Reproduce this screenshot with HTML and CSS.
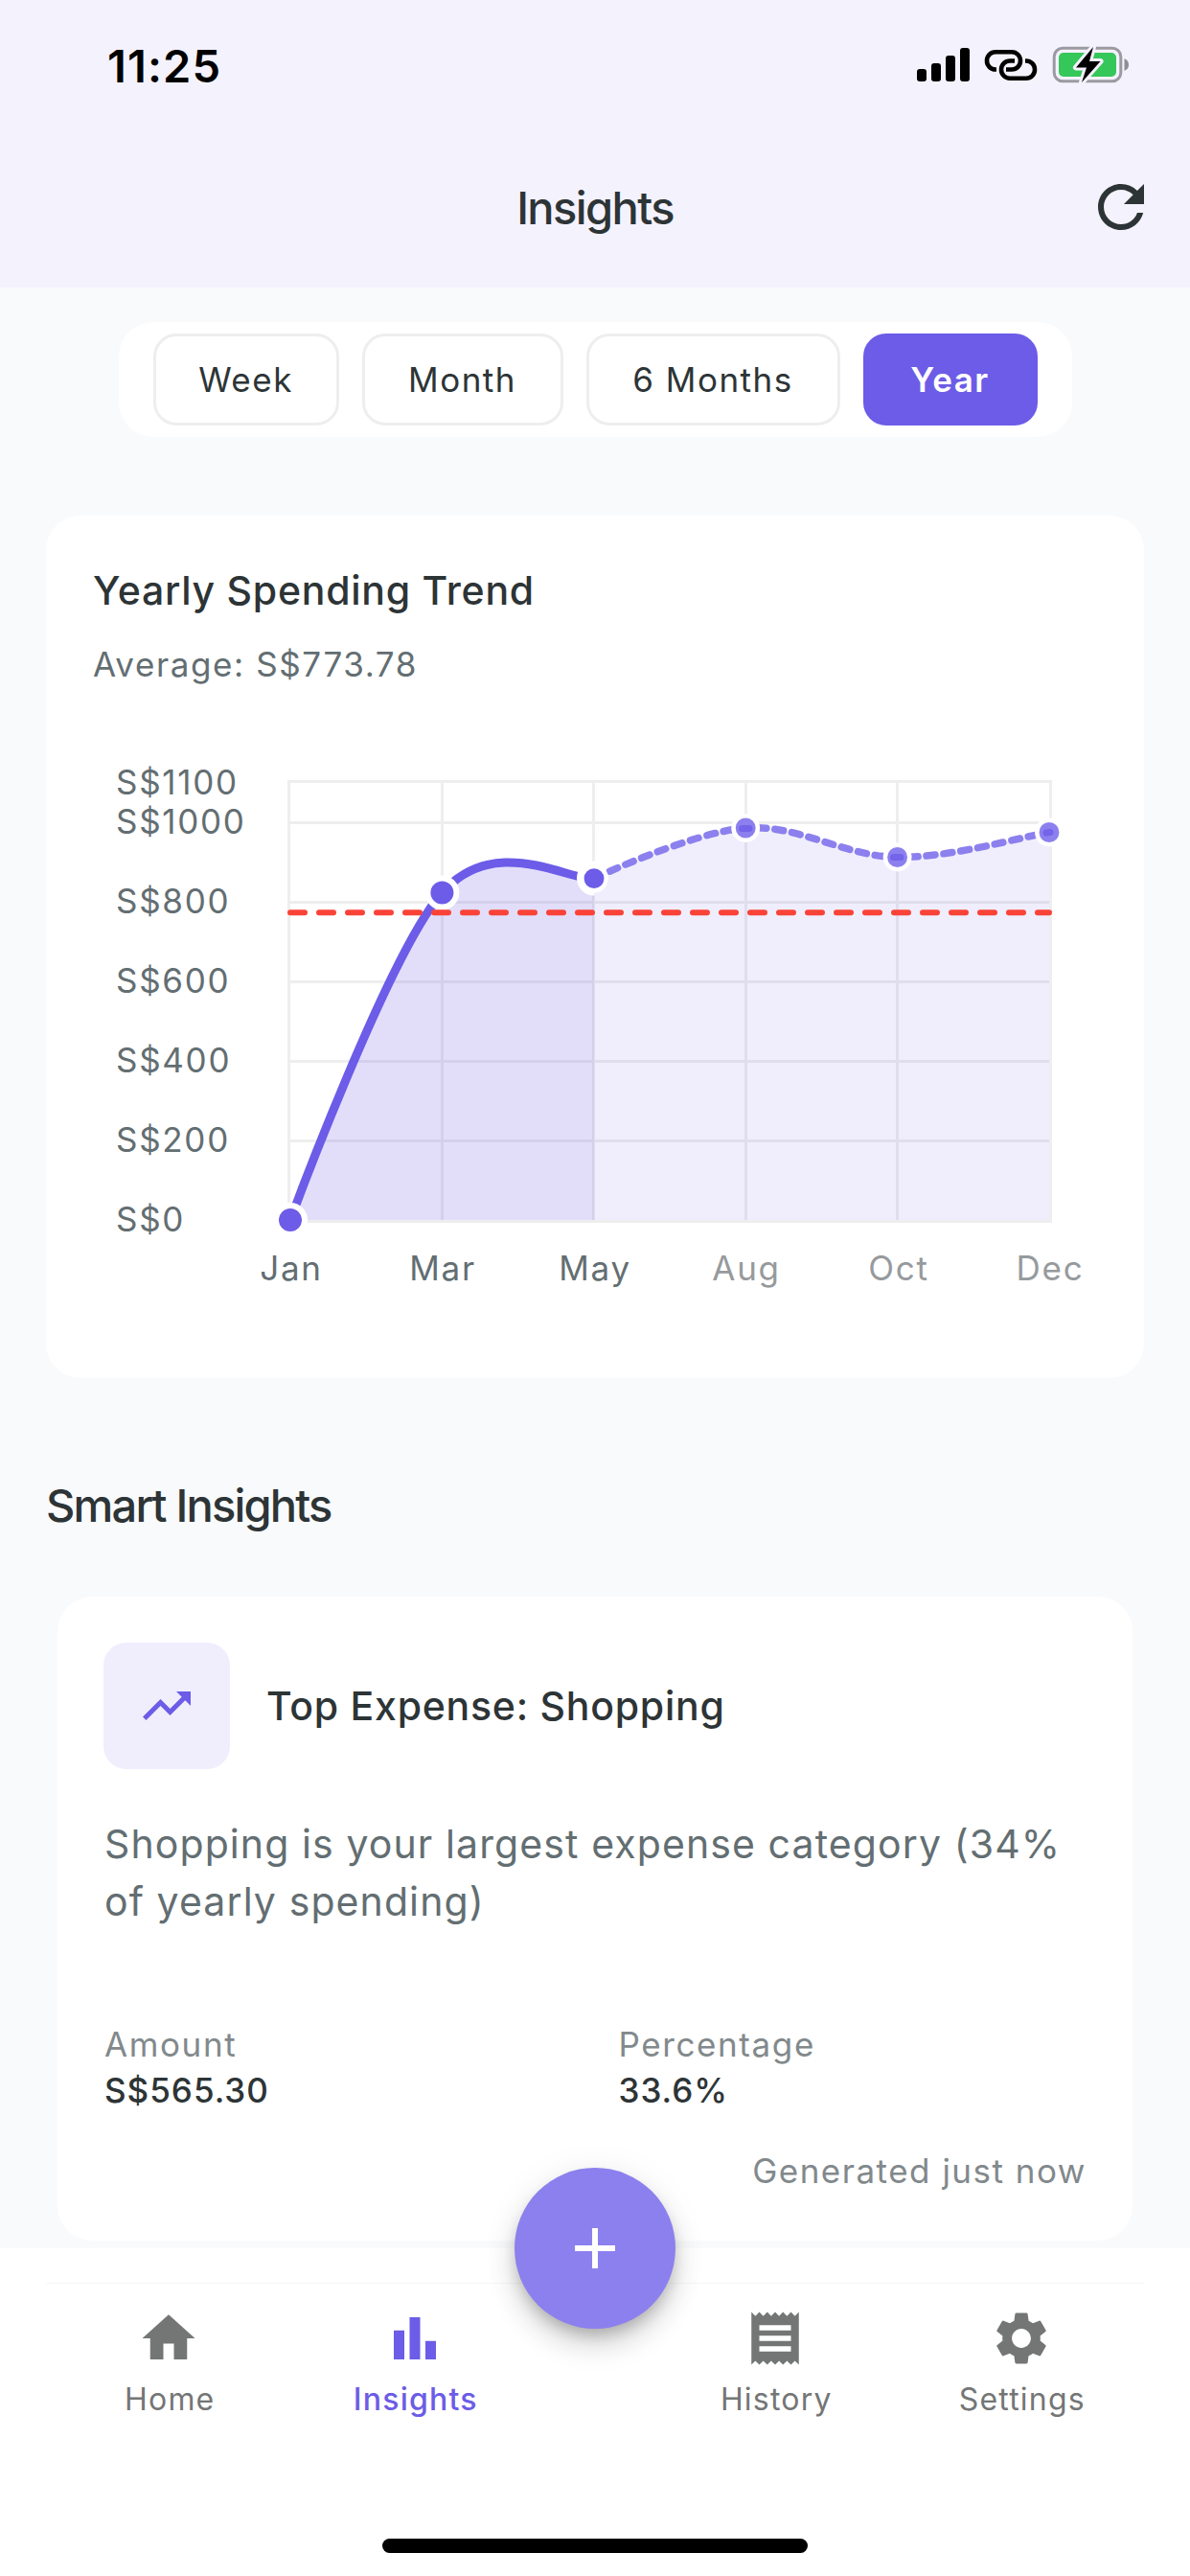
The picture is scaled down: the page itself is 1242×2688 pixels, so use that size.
FILE: index.html
```html
<!DOCTYPE html>
<html lang="en">
<head>
  <meta charset="UTF-8" />
  <title>Insights</title>
  <meta name="viewport" content="width=device-width, initial-scale=1" />
  <link rel="stylesheet" href="styles.css">
</head>
<body>
  <div class="app">
    <header class="header">
      <div class="status-bar">
        <span class="time">11:25</span>
        <svg class="status-icons" width="222" height="40" viewBox="957 48 222 40">
          <!-- Signal -->
          <rect x="957" y="72" width="10" height="13" rx="3" />
          <rect x="972" y="66" width="10" height="19" rx="3" />
          <rect x="987" y="58" width="10" height="27" rx="3" />
          <rect x="1002" y="50" width="10" height="35" rx="3" />
          <!-- Hotspot link -->
          <g fill="none" stroke="#000" stroke-width="4.6">
            <path d="M1040 72.5h-1a9 9 0 0 1-9-9.2a9 9 0 0 1 9-9h17a9 9 0 0 1 9 9.2a9 9 0 0 1-9 9h-6" />
            <path d="M1070 63.5h1a9 9 0 0 1 9 9.2a9 9 0 0 1-9 9h-17a9 9 0 0 1-9-9.2a9 9 0 0 1 9-9h5" />
          </g>
          <!-- Battery -->
          <rect x="1100.2" y="50.2" width="69.6" height="34.6" rx="9" fill="none" stroke="#9b9aa1" stroke-width="3" />
          <rect x="1105" y="55" width="60" height="25" rx="5" fill="#35c759" />
          <path d="M1173.5 61q4.5 2 4.5 6.500t-4.500 6.500z" fill="#8e8d93" />
          <path d="M1141 49l-18 21.500h11l-5 15.500 19.500-22h-11.500z" stroke="#f4f2fd" stroke-width="6" stroke-linejoin="round" />
          <path d="M1141 49l-18 21.500h11l-5 15.500 19.500-22h-11.500z" />
        </svg>
      </div>
      <div class="title-bar">
        <h1>Insights</h1>
        <svg class="refresh" viewBox="0 0 24 24"><path d="M17.65 6.350A7.958 7.958 0 0 0 12 4c-4.420 0-7.990 3.580-7.990 8s3.570 8 7.990 8c3.730 0 6.840-2.550 7.730-6h-2.080A5.990 5.990 0 0 1 12 18c-3.310 0-6-2.690-6-6s2.690-6 6-6c1.660 0 3.140.69 4.220 1.780L13 11h7V4l-2.350 2.350z" /></svg>
      </div>
    </header>

    <main class="content">
      <div class="period-tabs">
        <button class="tab week">Week</button>
        <button class="tab month">Month</button>
        <button class="tab half">6 Months</button>
        <button class="tab year active">Year</button>
      </div>

      <section class="card trend-card">
        <h2>Yearly Spending Trend</h2>
        <p class="average">Average: S$773.78</p>
        <svg class="chart" width="1096" height="620" viewBox="97 760 1096 620">
          <!-- Grid -->
          <g class="grid">
            <path d="M300 815.500H1098M300 858.500H1098M300 941.500H1098M300 1024.500H1098M300 1107.500H1098M300 1190.500H1098M300 1274.500H1098" />
            <path d="M301.500 815V1274M461.500 815V1274M619.500 815V1274M778.500 815V1274M936.500 815V1274M1096.500 815V1274" />
          </g>

          <!-- Actual spending -->
          <path class="area" d="M303 1273C303 1273 406 994 461.400 931.500C517 869 592 919 620 916.600V1273Z" />
          <path class="line" d="M303 1273C303 1273 406 994 461.400 931.500C517 869 592 919 620 916.600" />
          <g class="dots">
            <circle cx="303" cy="1273" r="15" />
            <circle cx="461.400" cy="931.500" r="15" />
            <circle cx="620" cy="916.600" r="15" />
          </g>

          <!-- Forecast -->
          <path class="area forecast" d="M620 916.600C620 916.600 723 868 778.200 864C834 860 881 893.700 936.600 894.500C992 895.300 1067 873 1095 868.500V1273H620Z" />
          <path class="line forecast" d="M620 916.600C620 916.600 723 868 778.200 864C834 860 881 893.700 936.600 894.500C992 895.300 1067 873 1095 868.500" />
          <g class="dots forecast">
            <circle class="current" cx="620" cy="916.600" r="12.700" />
            <circle cx="778.200" cy="864" r="12.700" />
            <circle cx="936.600" cy="894.500" r="12.700" />
            <circle cx="1095" cy="868.500" r="12.700" />
          </g>
          <path class="dot-marks" d="M774.500 864.500h7.500M932.500 894.500h7.500M1092 869l4-.5" />

          <path class="average-line" d="M303 952.300H1095" />

          <g class="labels">
            <text x="121" y="829">S$1100</text>
            <text x="121" y="870">S$1000</text>
            <text x="121" y="953">S$800</text>
            <text x="121" y="1036">S$600</text>
            <text x="121" y="1119">S$400</text>
            <text x="121" y="1202">S$200</text>
            <text x="121" y="1285">S$0</text>
          </g>
          <g class="labels months">
            <text x="304" y="1336">Jan</text>
            <text x="462" y="1336">Mar</text>
            <text x="621" y="1336">May</text>
            <text class="future" x="779" y="1336">Aug</text>
            <text class="future" x="938" y="1336">Oct</text>
            <text class="future" x="1096" y="1336">Dec</text>
          </g>
        </svg>
      </section>

      <h2 class="section-title">Smart Insights</h2>

      <section class="card insight-card">
        <div class="insight-head">
          <div class="insight-icon">
            <svg viewBox="0 0 24 24"><path d="M16 6l2.290 2.290-4.880 4.880-4-4L2 16.590 3.410 18l6-6 4 4 6.300-6.290L22 12V6z" /></svg>
          </div>
          <h3>Top Expense: Shopping</h3>
        </div>
        <p class="insight-text">Shopping is your largest expense category (34%<br>of yearly spending)</p>
        <div class="stats">
          <div>
            <div class="stat-label">Amount</div>
            <div class="stat-value">S$565.30</div>
          </div>
          <div>
            <div class="stat-label">Percentage</div>
            <div class="stat-value">33.6%</div>
          </div>
        </div>
        <p class="generated">Generated just now</p>
      </section>
    </main>

    <nav class="bottom-nav">
      <button class="fab" aria-label="Add">
        <svg viewBox="0 0 24 24"><path d="M19 13h-6v6h-2v-6H5v-2h6V5h2v6h6v2z" /></svg>
      </button>
      <div class="nav-items">
        <a class="nav-item">
          <svg viewBox="0 0 24 24"><path d="M10 20v-6h4v6h5v-8h3L12 3 2 12h3v8z" /></svg>
          <span>Home</span>
        </a>
        <a class="nav-item active">
          <svg viewBox="0 0 24 24"><path d="M4 9h4v11H4zm12 4h4v7h-4zm-6-9h4v16h-4z" /></svg>
          <span>Insights</span>
        </a>
        <a class="nav-item after-fab">
          <svg viewBox="0 0 24 24"><path d="M18 17H6v-2h12v2zm0-4H6v-2h12v2zm0-4H6V7h12v2zM3 22l1.500-1.500L6 22l1.500-1.500L9 22l1.500-1.500L12 22l1.500-1.500L15 22l1.500-1.500L18 22l1.500-1.500L21 22V2l-1.500 1.500L18 2l-1.500 1.500L15 2l-1.500 1.500L12 2l-1.500 1.500L9 2 7.500 3.500 6 2 4.500 3.500 3 2v20z" /></svg>
          <span>History</span>
        </a>
        <a class="nav-item">
          <svg viewBox="0 0 24 24"><path d="M19.140 12.940c.04-.3.060-.61.060-.94 0-.32-.02-.64-.07-.94l2.030-1.580c.18-.14.230-.41.120-.61l-1.920-3.320c-.12-.22-.37-.29-.59-.22l-2.390.96c-.5-.38-1.030-.7-1.620-.94l-.36-2.540c-.04-.24-.24-.41-.48-.41h-3.840c-.24 0-.43.170-.47.410l-.36 2.540c-.59.240-1.130.57-1.620.94l-2.390-.96c-.22-.08-.47 0-.59.220L2.740 8.870c-.12.210-.08.470.120.610l2.030 1.580c-.05.3-.09.630-.09.940s.02.640.070.940l-2.030 1.580c-.18.140-.23.410-.12.610l1.920 3.320c.12.220.37.290.59.220l2.390-.96c.5.380 1.030.7 1.620.94l.36 2.540c.05.240.24.410.48.410h3.840c.24 0 .44-.17.470-.41l.36-2.540c.59-.24 1.130-.56 1.620-.94l2.390.96c.22.080.47 0 .59-.22l1.920-3.320c.12-.22.070-.47-.12-.61l-2.010-1.580zM12 15.600c-1.980 0-3.600-1.620-3.600-3.600s1.620-3.600 3.600-3.600 3.600 1.620 3.600 3.600-1.620 3.600-3.600 3.600z" /></svg>
          <span>Settings</span>
        </a>
      </div>
      <div class="home-indicator"></div>
    </nav>
  </div>
</body>
</html>
```
FILE: styles.css
```css
* {
  box-sizing: border-box;
}

body {
  margin: 0;
  font-family: Inter, 'Liberation Sans', sans-serif;
  background: #f9fafc;
  color: #2d3436;
}

h1, h2, h3, p {
  margin: 0;
  font-weight: 500;
}

button {
  font-family: inherit;
  border: none;
  padding: 0;
}

.app {
  width: 1242px;
  height: 2688px;
  display: flex;
  flex-direction: column;
  overflow: hidden;
}

/* Header */
.header {
  height: 300px;
  background: #f4f2fd;
  flex-shrink: 0;
}

.status-bar {
  display: flex;
  justify-content: space-between;
  align-items: center;
  height: 136px;
  padding: 0 63px 0 112px;
}

.time {
  font-size: 47px;
  font-weight: 600;
  color: #000;
  letter-spacing: 1.1px;
}

.title-bar {
  display: grid;
  grid-template-columns: 1fr auto 1fr;
  align-items: center;
  height: 160px;
  padding: 0 36px;
}

.title-bar h1 {
  grid-column: 2;
  padding-top: 2px;
  font-size: 47px;
  line-height: 60px;
  letter-spacing: -1.6px;
}

.refresh {
  width: 72px;
  height: 72px;
  justify-self: end;
  fill: #2d3436;
}

/* Content */
.content {
  height: 2046px;
  flex-shrink: 0;
  padding: 36px 48px 0;
  display: flex;
  flex-direction: column;
}

.period-tabs {
  align-self: center;
  display: flex;
  gap: 24px;
  padding: 12px 36px;
  background: #fff;
  border-radius: 36px;
}

.tab {
  height: 96px;
  border: 3px solid #eee;
  border-radius: 24px;
  background: #fff;
  color: #2d3436;
  font-size: 35px;
  letter-spacing: 1.5px;
}

.tab.week {
  width: 194px;
}

.tab.month {
  width: 210px;
}

.tab.half {
  width: 265px;
}

.tab.year {
  width: 182px;
}

.tab.active {
  background: #6c5ce7;
  border-color: #6c5ce7;
  color: #fff;
  font-weight: 600;
}

.card {
  background: #fff;
  border-radius: 36px;
}

.trend-card {
  height: 900px;
  margin-top: 82px;
  padding: 48px 0 0 49px;
}

.trend-card h2 {
  font-size: 41px;
  line-height: 60px;
  letter-spacing: 0.75px;
}

.average {
  margin-top: 24px;
  font-size: 35px;
  font-weight: 400;
  line-height: 47px;
  letter-spacing: 1.6px;
  color: #636e72;
}

.chart {
  display: block;
  margin-top: 43px;
}

.grid path {
  stroke: #eee;
  stroke-width: 3;
}

.area {
  fill: #6c5ce7;
  fill-opacity: 0.2;
}

.area.forecast {
  fill-opacity: 0.1;
}

.line {
  fill: none;
  stroke: #6c5ce7;
  stroke-width: 9;
  stroke-linecap: round;
}

.line.forecast {
  stroke: #8c80ee;
  stroke-width: 7.5;
  stroke-dasharray: 9 9;
}

.dots circle {
  fill: #6c5ce7;
  stroke: #fff;
  stroke-width: 6;
}

.dots.forecast circle {
  fill: #8c80ee;
  stroke-width: 4.5;
}

.dots.forecast .current {
  fill: #6c5ce7;
}

.dot-marks {
  stroke: #7364e9;
  stroke-width: 7;
  stroke-linecap: round;
}

.average-line {
  stroke: #fa4338;
  stroke-width: 6;
  stroke-linecap: round;
  stroke-dasharray: 15 15;
}

.labels text {
  font-size: 35px;
  letter-spacing: 1.7px;
  fill: #636e72;
}

.months text {
  text-anchor: middle;
}

.labels .future {
  fill: #969a9d;
}

.section-title {
  margin-top: 103px;
  font-size: 47px;
  line-height: 60px;
  letter-spacing: -1.8px;
}

.insight-card {
  height: 672px;
  margin: 65px 12px 0;
  padding: 48px 48px 0;
}

.insight-head {
  display: flex;
  align-items: center;
  gap: 38px;
}

.insight-icon {
  width: 132px;
  height: 132px;
  display: flex;
  align-items: center;
  justify-content: center;
  background: #f0eefd;
  border-radius: 24px;
}

.insight-icon svg {
  width: 60px;
  height: 60px;
  fill: #6c5ce7;
}

.insight-head h3 {
  font-size: 41px;
  letter-spacing: 0.75px;
}

.insight-text {
  margin-top: 48px;
  padding-left: 1px;
  font-size: 41px;
  font-weight: 400;
  line-height: 60px;
  letter-spacing: 1.1px;
  color: #636e72;
  white-space: nowrap;
}

.stats {
  display: grid;
  grid-template-columns: 1fr 1fr;
  gap: 48px;
  margin-top: 95px;
  padding-left: 1px;
  font-size: 35px;
  line-height: 48px;
}

.stat-label {
  color: #82898c;
  letter-spacing: 1.6px;
}

.stat-value {
  font-weight: 500;
  letter-spacing: 1px;
}

.generated {
  margin-top: 36px;
  font-size: 35px;
  font-weight: 400;
  line-height: 48px;
  letter-spacing: 1.5px;
  text-align: right;
  color: #82898c;
}

/* Bottom navigation */
.bottom-nav {
  position: relative;
  height: 342px;
  flex-shrink: 0;
  background: #fff;
  padding: 36px 48px 0;
}

.nav-items {
  display: flex;
  height: 267px;
  border-top: 1px solid #f6f6f6;
}

.nav-item {
  width: 256.5px;
  display: flex;
  flex-direction: column;
  align-items: center;
  padding-top: 24px;
  color: #747676;
  font-size: 32px;
  line-height: 40px;
  letter-spacing: 1.2px;
}

.nav-item svg {
  width: 66px;
  height: 66px;
  fill: currentColor;
}

.nav-item span {
  margin: 11px 0 0 2px;
}

.nav-item.active {
  color: #6c5ce7;
  font-weight: 500;
}

.nav-item.after-fab {
  margin-left: 120px;
}

/* Floating add button sits over the edge of the nav */
.fab {
  position: absolute;
  top: -84px;
  left: 537px;
  width: 168px;
  height: 168px;
  display: flex;
  align-items: center;
  justify-content: center;
  border-radius: 50%;
  background: #8c80ee;
  box-shadow: 0 9px 15px -3px rgba(0, 0, 0, 0.2), 0 18px 30px rgba(0, 0, 0, 0.14), 0 3px 40px rgba(0, 0, 0, 0.06);
}

.fab svg {
  width: 72px;
  height: 72px;
  fill: #fff;
}

.home-indicator {
  width: 444px;
  height: 15px;
  margin: 0 auto;
  border-radius: 8px;
  background: #000;
}
```
